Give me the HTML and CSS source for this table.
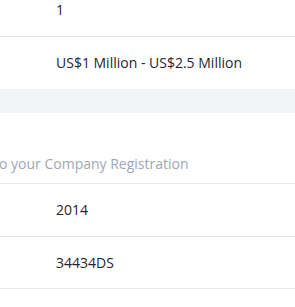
FILE: index.html
```html
<!DOCTYPE html>
<html lang="en">
<head>
<meta charset="utf-8">
<link rel="stylesheet" href="styles.css">
</head>
<body>
<div class="sheet">
  <div class="row"><span class="value">1</span></div>
  <div class="row row-last"><span class="value">US$1 Million - US$2.5 Million</span></div>
  <div class="band"></div>
  <div class="section-head"><p class="hint">o your Company Registration</p></div>
  <div class="row"><span class="value">2014</span></div>
  <div class="row row-short"><span class="value">34434DS</span></div>
</div>
</body>
</html>
```
FILE: styles.css
```css
html, body {
  margin: 0;
  padding: 0;
  background: #ffffff;
  overflow: hidden;
}
.sheet {
  margin-top: -16px;
  font-family: "Open Sans", "Noto Sans", sans-serif;
  font-size: 14px;
  line-height: 20px;
}
.row {
  height: 52px;
  display: flex;
  align-items: center;
  padding-left: 56px;
  border-bottom: 1px solid #e5e7ec;
}
.row-short {
  height: 51px;
}
.row-last {
  border-bottom: none;
}
.value {
  color: #1f2533;
}
.band {
  height: 24px;
  background: #f2f3f7;
}
.section-head {
  height: 70px;
  display: flex;
  align-items: flex-end;
  border-bottom: 1px solid #e5e7ec;
}
.hint {
  margin: 0 0 9px 0;
  text-indent: -1px;
  color: #a0a6b5;
  white-space: nowrap;
}
```
